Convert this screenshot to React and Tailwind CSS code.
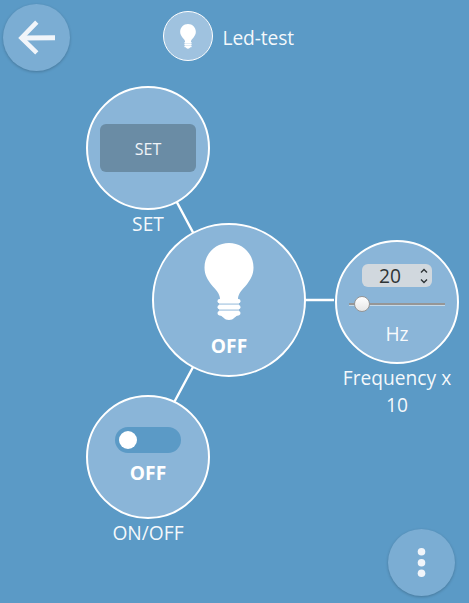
const FONT = "font-['Open_Sans','Noto_Sans',sans-serif]";

function Bulb({ className, band }) {
  return (
    <svg viewBox="0 0 50 78" className={className} fill="#fff">
      <path d="M25 0C11.3 0 .5 11 .5 24.5c0 7.5 3.300 12.500 6.500 16.700C11.500 46.500 16 50.500 16 56h18c0-5.500 4.500-9.500 9-14.800 3.200-4.200 6.500-9.200 6.500-16.700C49.500 11 38.700 0 25 0z" />
      <rect x="15" y="60" width="20" height="8" fill={band} />
      <rect x="13.500" y="56" width="23" height="4.300" rx="2" />
      <rect x="13.500" y="62" width="23" height="4.300" rx="2" />
      <path d="M15.500 68h19a2 2 0 0 1 2 2c0 1.800-1.500 2.500-3.200 2.800-2.300.6-3.300 4.200-8.300 4.200s-6-3.600-8.300-4.200c-1.700-.3-3.200-1-3.200-2.800a2 2 0 0 1 2-2z" />
    </svg>
  );
}

function Node({ place, label, children }) {
  return (
    <div className={`absolute flex w-[124px] flex-col items-center ${place}`}>
      <div className="flex h-[124px] w-[124px] shrink-0 flex-col items-center rounded-full border-2 border-white bg-[#8ab5d8]">
        {children}
      </div>
      <div className="w-[124px] text-center text-[19.2px] leading-[27px] text-white/95">{label}</div>
    </div>
  );
}

export default function App() {
  return (
    <div className={`relative h-[603px] w-[469px] overflow-hidden bg-[#5b9ac6] text-white ${FONT}`}>
      <header className="flex h-[75px] items-start">
        <button className="mt-1 ml-[3px] h-[67px] w-[67px] rounded-full bg-[#7badd3] shadow-[0_1px_3px_rgba(0,0,0,0.22)]">
          <svg viewBox="0 0 67 67" className="h-[67px] w-[67px]" fill="none" stroke="#f1f5fa">
            <path d="M52 33.700 19 34" strokeWidth="5" />
            <path d="M33.800 18.200 18.500 34 33.800 48.800" strokeWidth="4.600" />
          </svg>
        </button>
        <div className="mt-[11px] ml-[93px] flex h-[50px] w-[50px] items-center justify-center rounded-full border border-white bg-[#9fc2df]">
          <Bulb className="h-[25px] w-4" band="#d5e4f1" />
        </div>
        <h1 className="mt-[24px] ml-[9.5px] text-[19.2px] leading-[27px] font-normal tracking-[-0.1px] text-white/95">Led-test</h1>
      </header>

      <svg className="absolute inset-0 h-[603px] w-[469px]" stroke="#fff" strokeWidth="2.400">
        <path d="M148 148 229 300M229 300 148 451M229 300H334" />
      </svg>

      <Node place="left-[86px] top-[86px]" label="SET">
        <button className="mt-9 h-12 w-24 rounded-md bg-[#6a8ca5] pt-[2px] text-[16px] leading-6 text-[#f0f4f8]">SET</button>
      </Node>

      <div className="absolute top-[223px] left-[152px] flex h-[154px] w-[154px] flex-col items-center rounded-full border-2 border-white bg-[#8ab5d8]">
        <Bulb className="mt-[18px] h-[78px] w-[50px]" band="#c1d7ea" />
        <div className="mt-[11px] text-[19.2px] leading-[27px] font-bold">OFF</div>
      </div>

      <Node place="left-[335px] top-[240px]" label={<>Frequency x<br />10</>}>
        <div className="mt-[22px] flex h-[23px] w-[70px] items-center rounded-md bg-[#d1d8de]">
          <span className="w-[56px] text-center text-[19.2px] leading-[23px] text-[#2e3436]">20</span>
          <svg viewBox="0 0 8 16" className="ml-[2px] h-4 w-2" fill="none" stroke="#2e3436" strokeWidth="1.400">
            <path d="m1 4.500 3-3 3 3M1 11.500l3 3 3-3" />
          </svg>
        </div>
        <div className="mt-[9px] flex h-4 w-24 items-center bg-[linear-gradient(#969696,#969696),linear-gradient(#c5d9e9,#c5d9e9)] bg-[length:96px_2px,96px_1px] bg-[position:0_7px,0_9px] bg-no-repeat">
          <div className="ml-[5px] h-4 w-4 rounded-full border border-[#969696] bg-linear-to-b from-white to-[#e6e6e6]" />
        </div>
        <div className="mt-[8px] text-[19.2px] leading-[27px] text-white/95">Hz</div>
      </Node>

      <Node place="left-[86px] top-[395px]" label="ON/OFF">
        <div className="mt-[30px] flex h-[26px] w-[66px] items-center rounded-full bg-[#5b9ac6] pl-1">
          <div className="h-[18px] w-[18px] rounded-full bg-white" />
        </div>
        <div className="mt-[6px] text-[19.2px] leading-[27px] font-bold">OFF</div>
      </Node>

      <button className="absolute top-[529px] left-[388px] h-[67px] w-[67px] rounded-full bg-[#7badd3] shadow-[0_1px_3px_rgba(0,0,0,0.22)]">
        <svg viewBox="0 0 67 67" className="h-[67px] w-[67px]" fill="#f1f5fa">
          <circle cx="33.500" cy="22.800" r="3.800" />
          <circle cx="33.500" cy="33.800" r="3.800" />
          <circle cx="33.500" cy="44.300" r="3.800" />
        </svg>
      </button>
    </div>
  );
}
